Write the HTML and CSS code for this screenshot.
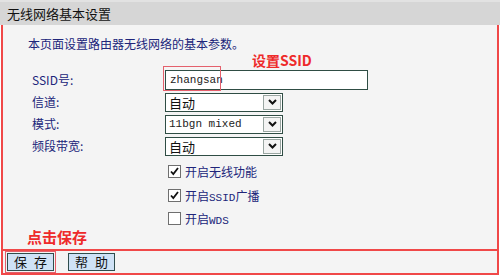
FILE: index.html
```html
<!DOCTYPE html>
<html lang="zh-CN">
  <head>
    <meta charset="UTF-8" />
    <title>无线网络基本设置</title>
    <link rel="stylesheet" href="styles.css">
  </head>
  <body>
    <div class="panel">
      <div class="title">无线网络基本设置</div>
      <div class="content">
        <p class="intro">本页面设置路由器无线网络的基本参数。</p>
        <div class="hint hint-ssid">设置SSID</div>
        <div class="form">
          <label>SSID号:</label>
          <div class="ssid-wrap">
            <div class="text-input">zhangsan</div>
            <span class="mark"></span>
          </div>

          <label>信道:</label>
          <div class="select">
            <span class="value">自动</span>
            <span class="arrow"><svg width="9" height="6" viewBox="0 0 9 6"><path d="M1 1 L4.5 4.5 L8 1" fill="none" stroke="#111" stroke-width="2"/></svg></span>
          </div>

          <label>模式:</label>
          <div class="select">
            <span class="value mono">11bgn mixed</span>
            <span class="arrow"><svg width="9" height="6" viewBox="0 0 9 6"><path d="M1 1 L4.5 4.5 L8 1" fill="none" stroke="#111" stroke-width="2"/></svg></span>
          </div>

          <label>频段带宽:</label>
          <div class="select">
            <span class="value">自动</span>
            <span class="arrow"><svg width="9" height="6" viewBox="0 0 9 6"><path d="M1 1 L4.5 4.5 L8 1" fill="none" stroke="#111" stroke-width="2"/></svg></span>
          </div>
        </div>

        <div class="checks">
          <div class="check-row">
            <span class="box"><svg width="11" height="11" viewBox="0 0 11 11"><path d="M2 5.5 L4.3 8 L9 2" fill="none" stroke="#111" stroke-width="1.8"/></svg></span>
            <span>开启无线功能</span>
          </div>
          <div class="check-row">
            <span class="box"><svg width="11" height="11" viewBox="0 0 11 11"><path d="M2 5.5 L4.3 8 L9 2" fill="none" stroke="#111" stroke-width="1.8"/></svg></span>
            <span>开启<span class="mono-sm">SSID</span>广播</span>
          </div>
          <div class="check-row">
            <span class="box"></span>
            <span>开启<span class="mono-sm">WDS</span></span>
          </div>
        </div>

        <div class="hint hint-save">点击保存</div>
      </div>
      <div class="actions">
        <button class="btn btn-save">保 存</button>
        <button class="btn">帮 助</button>
      </div>
    </div>
  </body>
</html>
```

FILE: styles.css
```css
html,
body {
  margin: 0;
  background-color: #ffffff;
}
body {
  font-family: "Noto Sans CJK SC", "Liberation Sans", sans-serif;
  font-size: 12px;
  width: 500px;
}
.panel {
  width: 500px;
}
.title {
  height: 23px;
  line-height: 24px;
  padding-left: 7px;
  font-size: 13px;
  color: #111111;
  background-color: #d6d6d6;
  border-top: 2px solid #e2e2e2;
}
.content {
  margin: 0 1px;
  padding: 11px 0 4px;
  background-color: #f4f4f4;
  border: 2px solid #f04848;
  border-top: none;
}
.intro {
  margin: 0 0 0 25px;
  line-height: 16px;
  color: #20257a;
}
.hint {
  color: #ee2a2a;
  font-weight: bold;
  font-size: 14px;
  line-height: 16px;
}
.hint-ssid {
  margin-left: 249px;
}
.hint-save {
  margin-left: 24px;
  font-size: 15px;
}
.form {
  display: grid;
  grid-template-columns: 162px auto;
  grid-auto-rows: 22px;
  align-items: center;
  margin-top: 1px;
}
.form label {
  padding-left: 29px;
  color: #20257a;
  line-height: 16px;
}
.ssid-wrap {
  position: relative;
  width: 203px;
}
.text-input {
  height: 18px;
  line-height: 18px;
  padding-left: 4px;
  border: 1px solid #2f4d44;
  background-color: #ffffff;
  font-family: "Liberation Mono", monospace;
  font-size: 11px;
  color: #1a1a1a;
}
.mark {
  position: absolute;
  left: -2px;
  top: -4px;
  width: 56px;
  height: 23px;
  border: 1px solid #e4606c;
}
.select {
  display: flex;
  width: 116px;
  height: 17px;
  border: 1px solid #2f4d44;
  background-color: #ffffff;
}
.select .value {
  flex: 1;
  padding-left: 3px;
  line-height: 17px;
  font-size: 13px;
  color: #111111;
}
.select .value.mono {
  font-family: "Liberation Mono", monospace;
  font-size: 11px;
  color: #222222;
}
.select .arrow {
  display: flex;
  align-items: center;
  justify-content: center;
  width: 16px;
  margin: 1px;
  border: 1px solid #9aa6a2;
  background-color: #f4f4f4;
}
.checks {
  margin: 2px 0 0 165px;
}
.check-row {
  display: flex;
  align-items: center;
  gap: 4px;
  height: 24px;
  color: #20257a;
  font-size: 12px;
}
.check-row:last-child {
  height: 22px;
}
.box {
  display: flex;
  width: 11px;
  height: 11px;
  border: 1px solid #6f6f6f;
  background-color: #ffffff;
}
.mono-sm {
  font-family: "Liberation Mono", monospace;
  font-size: 11px;
}
.actions {
  display: flex;
  gap: 14px;
  height: 20px;
  margin: 0 1px;
  padding: 2px 0 0 4px;
  background-color: #f4f4f4;
  border: 2px solid #f04848;
  border-top: none;
}
.btn {
  width: 47px;
  height: 18px;
  padding: 0 0 0 2px;
  font-family: "Noto Sans CJK SC", sans-serif;
  font-size: 13px;
  line-height: 16px;
  letter-spacing: 2px;
  color: #111111;
  background-color: #cfe2f6;
  border: 1px solid #2f4d4d;
}
.btn-save {
  outline: 1px solid #e4606c;
  outline-offset: 1px;
}
```
